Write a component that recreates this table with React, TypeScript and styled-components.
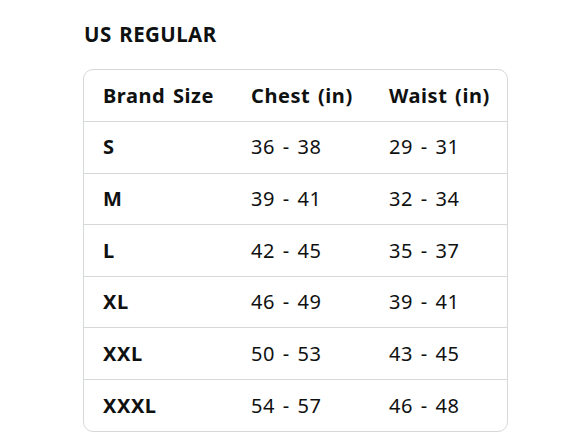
import styled, { createGlobalStyle } from 'styled-components'

const GlobalStyle = createGlobalStyle`
  body {
    margin: 0;
    background: #ffffff;
    font-family: 'Noto Sans', 'Open Sans', sans-serif;
    color: #0f1111;
  }
`

const Page = styled.div`
  width: 588px;
  height: 441px;
  padding: 21px 0 0 83px;
  box-sizing: border-box;
  overflow: hidden;
`

const Title = styled.h2`
  margin: 0 0 22px 1px;
  font-size: 20.5px;
  line-height: 26px;
  font-weight: 700;
  letter-spacing: 0.4px;
  word-spacing: 2px;
`

const Card = styled.div`
  width: 425px;
  box-sizing: border-box;
  border: 1px solid #d5d9d9;
  border-radius: 10px;
  overflow: hidden;
`

const Table = styled.table`
  width: 100%;
  border-collapse: collapse;
  table-layout: fixed;
`

const Row = styled.tr`
  height: 51.6px;
  & + & {
    border-top: 1px solid #d5d9d9;
  }
`

const Cell = styled.td<{ $bold?: boolean }>`
  padding: 0 0 1px 19px;
  font-size: 20px;
  font-weight: ${(p) => (p.$bold ? 700 : 400)};
  letter-spacing: 0.55px;
  word-spacing: 2px;
  text-align: left;
  vertical-align: middle;
  white-space: nowrap;
`

const widths = [148, 138, 137]

const rows = [
  ['S', '36 - 38', '29 - 31'],
  ['M', '39 - 41', '32 - 34'],
  ['L', '42 - 45', '35 - 37'],
  ['XL', '46 - 49', '39 - 41'],
  ['XXL', '50 - 53', '43 - 45'],
  ['XXXL', '54 - 57', '46 - 48'],
]

function App() {
  return (
    <>
      <GlobalStyle />
      <Page>
        <Title>US REGULAR</Title>
        <Card>
          <Table>
            <colgroup>
              {widths.map((w, i) => (
                <col key={i} style={{ width: w }} />
              ))}
            </colgroup>
            <tbody>
              <Row>
                {['Brand Size', 'Chest (in)', 'Waist (in)'].map((h) => (
                  <Cell key={h} $bold>
                    {h}
                  </Cell>
                ))}
              </Row>
              {rows.map((r) => (
                <Row key={r[0]}>
                  {r.map((v, i) => (
                    <Cell key={i} $bold={i === 0}>
                      {v}
                    </Cell>
                  ))}
                </Row>
              ))}
            </tbody>
          </Table>
        </Card>
      </Page>
    </>
  )
}

export default App
